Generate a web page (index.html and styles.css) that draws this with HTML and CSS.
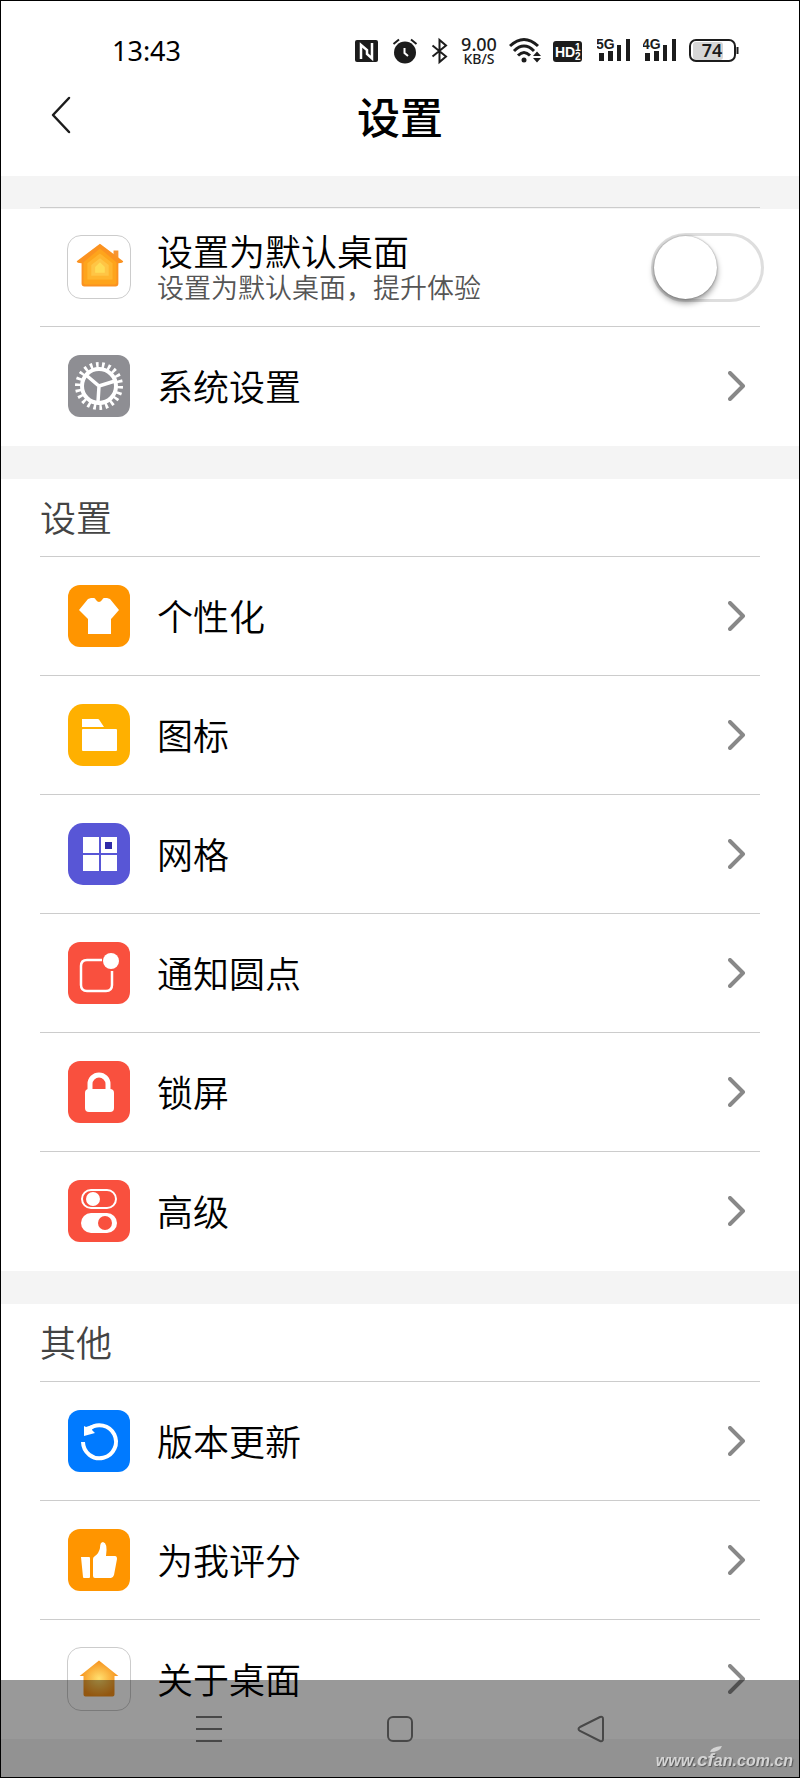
FILE: index.html
```html
<!DOCTYPE html>
<html lang="zh-CN">
<head>
    <meta charset="UTF-8">
    <meta name="viewport" content="width=device-width, initial-scale=1">
    <title>设置</title>
    <link rel="stylesheet" href="styles.css">
</head>
<body>
    <div class="screen">
        <!-- Status bar -->
        <div class="status-bar">
            <span class="time">13:43</span>
            <div class="status-icons">
                <svg width="24" height="28" viewBox="0 0 24 28">
                    <rect x="0" y="3" width="23" height="22" rx="2" fill="#1c1c1c"/>
                    <path d="M6 22V8L12 13v4l5 4.500V6" fill="none" stroke="#fff" stroke-width="2.500"/>
                </svg>
                <svg width="28" height="28" viewBox="0 0 28 28">
                    <circle cx="14" cy="15.500" r="11" fill="#1c1c1c"/>
                    <path d="M2.500 7L8 2.500M25.500 7L20 2.500" stroke="#1c1c1c" stroke-width="2"/>
                    <path d="M13.500 11v5l3.500 3" fill="none" stroke="#fff" stroke-width="2"/>
                </svg>
                <svg width="18" height="28" viewBox="0 0 18 28">
                    <path d="M1.500 8.500L15 19.500L8.500 25V3L15 8.500L1.500 19.500" fill="none" stroke="#1c1c1c" stroke-width="2"/>
                </svg>
                <div class="net-speed">
                    <span class="speed-value">9.00</span>
                    <span class="speed-unit">KB/S</span>
                </div>
                <svg width="32" height="28" viewBox="0 0 32 28">
                    <g fill="none" stroke="#1c1c1c" stroke-width="3">
                        <path d="M1 9Q15 -4 29 9"/>
                        <path d="M5 14Q15 4 25 14"/>
                        <path d="M9 18.500Q15 12.500 21 18.500"/>
                    </g>
                    <circle cx="15" cy="23" r="2.500" fill="#1c1c1c"/>
                    <path d="M28 14.500l4 4.500h-8zM28 25.500l4-4.500h-8z" fill="#1c1c1c"/>
                </svg>
                <svg width="32" height="28" viewBox="0 0 32 28">
                    <rect x="0" y="4" width="29" height="21" rx="3" fill="#1c1c1c"/>
                    <text x="2" y="20" class="hd-text">HD</text>
                    <text x="22" y="14" class="hd-num">1</text>
                    <text x="22" y="23" class="hd-num">2</text>
                </svg>
                <svg width="34" height="28" viewBox="0 0 34 28">
                    <path d="M2 16h5v8H2zM11 14h5v10h-5zM20 8h4v16h-4zM29 2h4v22h-4z" fill="#1c1c1c"/>
                    <text x="-1" y="12" class="net-text">5G</text>
                </svg>
                <svg width="34" height="28" viewBox="0 0 34 28">
                    <path d="M2 16h5v8H2zM11 14h5v10h-5zM20 8h4v16h-4zM29 2h4v22h-4z" fill="#1c1c1c"/>
                    <text x="-1" y="12" class="net-text">4G</text>
                </svg>
                <svg width="50" height="28" viewBox="0 0 50 28">
                    <rect x="4" y="5" width="30" height="18" rx="3" fill="#d6d6d6"/>
                    <rect x="1" y="3" width="45" height="21" rx="6" fill="none" stroke="#1c1c1c" stroke-width="2"/>
                    <path d="M48.500 10v7" stroke="#1c1c1c" stroke-width="2"/>
                    <text x="23" y="20" class="battery-text">74</text>
                </svg>
            </div>
        </div>

        <header class="title-bar">
            <button class="back-button" aria-label="返回">
                <svg width="22" height="38" viewBox="0 0 22 38">
                    <path d="M19 2L3 19L19 36" fill="none" stroke="#1c1c1c" stroke-width="2.500" stroke-linecap="round" stroke-linejoin="round"/>
                </svg>
            </button>
            <h1>设置</h1>
        </header>

        <main>
            <div class="divider"></div>

            <ul class="list list-first">
                <li class="row">
                    <svg class="icon icon-outline" viewBox="0 0 64 64">
                        <path d="M47 22V15h5v11z" fill="#f79432"/>
                        <path d="M33 8L57 26Q57 28 52 28V49Q52 52 49 52H17Q14 52 14 49V28Q9 28 9 26Z" fill="#fb9220"/>
                        <path d="M33 13L50 27V48Q50 50 48 50H18Q16 50 16 48V27Z" fill="#fea41c"/>
                        <path d="M33 18L46 28V45H20V28Z" fill="#ffb52e"/>
                        <path d="M33 23L42 30V41H24V30Z" fill="#ffc545"/>
                        <path d="M33 27L38 32V38H28V32Z" fill="#ffdb55"/>
                    </svg>
                    <label class="label" for="default-home">
                        设置为默认桌面
                        <small>设置为默认桌面，提升体验</small>
                    </label>
                    <input type="checkbox" class="switch" id="default-home">
                </li>
                <li>
                    <a class="row" href="#">
                        <svg class="icon gray" viewBox="0 0 62 62">
                            <g fill="none" stroke="#fff">
                                <circle cx="31" cy="31" r="21" stroke-width="6" pathLength="132" stroke-dasharray="2.600 3.400"/>
                                <circle cx="31" cy="31" r="17" stroke-width="4"/>
                                <path d="M18 20L31 31L47 26M31 31L30 47" stroke-width="3.500"/>
                            </g>
                        </svg>
                        <span class="label">系统设置</span>
                        <svg class="arrow" viewBox="0 0 18 30"><path d="M2 2L15 15L2 28"/></svg>
                    </a>
                </li>
            </ul>

            <div class="divider"></div>

            <h2>设置</h2>
            <ul class="list">
                <li>
                    <a class="row" href="#">
                        <svg class="icon orange" viewBox="0 0 62 62">
                            <path d="M23 13h3q1 0 2 2 3 4 6 0 1-2 2-2h3l3 1 9 11-7 8-1 1v15H20V34l-1-1-8-8 9-11z" fill="#fff"/>
                        </svg>
                        <span class="label">个性化</span>
                        <svg class="arrow" viewBox="0 0 18 30"><path d="M2 2L15 15L2 28"/></svg>
                    </a>
                </li>
                <li>
                    <a class="row" href="#">
                        <svg class="icon yellow icon-round" viewBox="0 0 62 62">
                            <path d="M14 15h16q1 0 2 2l4 6H14zM15 25h33q1 0 1 1v20q0 1-1 1H15q-1 0-1-1V26q0-1 1-1z" fill="#fff"/>
                        </svg>
                        <span class="label">图标</span>
                        <svg class="arrow" viewBox="0 0 18 30"><path d="M2 2L15 15L2 28"/></svg>
                    </a>
                </li>
                <li>
                    <a class="row" href="#">
                        <svg class="icon purple icon-round" viewBox="0 0 62 62">
                            <path d="M15 14h16v16H15zM33 14h16v16H33zM15 32h16v16H15zM33 32h16v16H33z" fill="#fff"/>
                            <rect x="37" y="19" width="7" height="7" fill="#2f2ba8"/>
                        </svg>
                        <span class="label">网格</span>
                        <svg class="arrow" viewBox="0 0 18 30"><path d="M2 2L15 15L2 28"/></svg>
                    </a>
                </li>
                <li>
                    <a class="row" href="#">
                        <svg class="icon red" viewBox="0 0 62 62">
                            <path d="M34 18H19q-6 0-6 6v19q0 6 6 6h19q6 0 6-6V29" fill="none" stroke="#fff" stroke-width="2.500"/>
                            <circle cx="43" cy="19" r="8" fill="#fff"/>
                        </svg>
                        <span class="label">通知圆点</span>
                        <svg class="arrow" viewBox="0 0 18 30"><path d="M2 2L15 15L2 28"/></svg>
                    </a>
                </li>
                <li>
                    <a class="row" href="#">
                        <svg class="icon red" viewBox="0 0 62 62">
                            <path d="M22 29V23a9 9 0 0 1 18 0v6" fill="none" stroke="#fff" stroke-width="5"/>
                            <rect x="17" y="28" width="29" height="23" rx="4" fill="#fff"/>
                        </svg>
                        <span class="label">锁屏</span>
                        <svg class="arrow" viewBox="0 0 18 30"><path d="M2 2L15 15L2 28"/></svg>
                    </a>
                </li>
                <li>
                    <a class="row" href="#">
                        <svg class="icon red" viewBox="0 0 62 62">
                            <rect x="14" y="10" width="34" height="18" rx="9" fill="none" stroke="#fff" stroke-width="2"/>
                            <circle cx="25" cy="19" r="7" fill="#fff"/>
                            <rect x="13" y="33" width="36" height="20" rx="10" fill="#fff"/>
                            <circle cx="37" cy="43" r="7" fill="#f9503e"/>
                        </svg>
                        <span class="label">高级</span>
                        <svg class="arrow" viewBox="0 0 18 30"><path d="M2 2L15 15L2 28"/></svg>
                    </a>
                </li>
            </ul>

            <div class="divider"></div>

            <h2>其他</h2>
            <ul class="list">
                <li>
                    <a class="row" href="#">
                        <svg class="icon blue" viewBox="0 0 62 62">
                            <path d="M15 32A16.500 16.500 0 1 0 21 19" fill="none" stroke="#fff" stroke-width="4"/>
                            <path d="M16 16l2 1 6-2v5l3 3-11 3z" fill="#fff"/>
                        </svg>
                        <span class="label">版本更新</span>
                        <svg class="arrow" viewBox="0 0 18 30"><path d="M2 2L15 15L2 28"/></svg>
                    </a>
                </li>
                <li>
                    <a class="row" href="#">
                        <svg class="icon orange" viewBox="0 0 62 62">
                            <path d="M13 28h8q1 0 1 1v19q0 1-1 1h-5q-1 0-1-1z" fill="#fff"/>
                            <path d="M25 30q0-2 2-3 4-3 5-8 0-6 3-6 5 1 3 14h9q2 0 2 3l-3 16q-1 3-3 3H27q-2 0-2-2z" fill="#fff"/>
                        </svg>
                        <span class="label">为我评分</span>
                        <svg class="arrow" viewBox="0 0 18 30"><path d="M2 2L15 15L2 28"/></svg>
                    </a>
                </li>
                <li>
                    <a class="row" href="#">
                        <svg class="icon icon-outline" viewBox="0 0 64 64">
                            <defs>
                                <radialGradient id="house-glow">
                                    <stop offset="0" stop-color="#ffe070"/>
                                    <stop offset="1" stop-color="#f6921c"/>
                                </radialGradient>
                            </defs>
                            <path d="M32 13L52 29H48V48Q48 50 46 50H18Q16 50 16 48V29H12Z" fill="url(#house-glow)"/>
                        </svg>
                        <span class="label">关于桌面</span>
                        <svg class="arrow" viewBox="0 0 18 30"><path d="M2 2L15 15L2 28"/></svg>
                    </a>
                </li>
            </ul>
        </main>

        <!-- System navigation, drawn over the list -->
        <nav class="nav-bar">
            <button aria-label="最近任务">
                <svg width="28" height="28" viewBox="0 0 28 28"><path d="M1 2h26M1 14h26M1 26h26"/></svg>
            </button>
            <button aria-label="主屏幕">
                <svg width="28" height="28" viewBox="0 0 28 28"><rect x="2" y="2" width="24" height="24" rx="5"/></svg>
            </button>
            <button aria-label="返回上一页">
                <svg width="28" height="28" viewBox="0 0 28 28"><path d="M3 12L23 2q3-1 3 2v20q0 3-3 2L3 16q-3-2 0-4z"/></svg>
            </button>
            <span class="watermark">www.<b>cf</b>an.com.cn<svg class="leaf" viewBox="0 0 12 6"><path d="M0 6Q1 1 12 0Q10 6 0 6z"/></svg></span>
        </nav>
    </div>
</body>
</html>
```

FILE: styles.css
```css
* {
    box-sizing: border-box;
    margin: 0;
    padding: 0;
}

body {
    font-family: "Noto Sans CJK SC", sans-serif;
    background-color: #f4f4f4;
    color: #000;
}

button {
    background: none;
    border: none;
    cursor: pointer;
}

a {
    color: inherit;
    text-decoration: none;
}

ul {
    list-style: none;
}

svg {
    display: block;
    flex-shrink: 0;
}

.screen {
    min-height: 100vh;
    border: 1px solid #000;
}

/* Status bar */
.status-bar {
    display: flex;
    justify-content: space-between;
    align-items: center;
    padding: 35px 60px 0 111px;
    height: 65px;
    background-color: #fff;
    font-family: "Noto Sans", sans-serif;
}

.time {
    font-size: 27px;
    line-height: 30px;
}

.status-icons {
    display: flex;
    align-items: center;
    gap: 12px;
}

.net-speed {
    display: flex;
    flex-direction: column;
    align-items: center;
    width: 36px;
    color: #1c1c1c;
}

.speed-value {
    font-size: 18px;
    font-weight: 500;
    line-height: 16px;
}

.speed-unit {
    font-size: 14px;
    font-weight: 500;
    line-height: 14px;
}

.hd-text {
    fill: #fff;
    font: bold 14px "Liberation Sans", sans-serif;
}

.hd-num {
    fill: #fff;
    font: bold 10px "Liberation Sans", sans-serif;
}

.net-text {
    fill: #1c1c1c;
    font: bold 14px "Liberation Sans", sans-serif;
    stroke: #fff;
    stroke-width: 2px;
    paint-order: stroke;
}

.battery-text {
    fill: #1c1c1c;
    font: 600 18px "Noto Sans", sans-serif;
    text-anchor: middle;
}

/* Title bar */
.title-bar {
    display: grid;
    grid-template-columns: 100px 1fr 100px;
    align-items: center;
    height: 110px;
    padding-bottom: 12px;
    background-color: #fff;
}

.back-button {
    justify-self: start;
    padding: 10px 20px 10px 49px;
}

h1 {
    font-size: 43px;
    font-weight: 500;
    line-height: 60px;
    text-align: center;
}

/* Settings list */
main {
    background-color: #fff;
}

.divider {
    height: 33px;
    background-color: #f4f4f4;
}

h2 {
    padding: 0 39px 2px;
    font-size: 36px;
    font-weight: 350;
    line-height: 75px;
    color: #444;
}

.list {
    padding: 0 39px 1px;
}

.list-first {
    margin-top: -2px;
}

.row {
    display: flex;
    align-items: center;
    gap: 27px;
    height: 119px;
    padding: 0 14px 0 28px;
    border-top: 1px solid #ccc;
}

.icon {
    width: 62px;
    height: 62px;
    border-radius: 12px;
}

.icon-round {
    border-radius: 15px;
}

.icon-outline {
    width: 64px;
    height: 64px;
    margin: 0 -1px;
    border: 1px solid #ccc;
    border-radius: 14px;
}

.gray {
    background-color: #8e8e93;
}

.orange {
    background-color: #ff9500;
}

.yellow {
    background-color: #ffb000;
}

.purple {
    background-color: #5856d6;
}

.red {
    background-color: #f9503e;
}

.blue {
    background-color: #007aff;
}

.label {
    flex: 1;
    padding-bottom: 2px;
    font-size: 36px;
    font-weight: 350;
    line-height: 42px;
}

.label small {
    display: block;
    font-size: 27px;
    line-height: 32px;
    color: #555;
}

.arrow {
    width: 18px;
    height: 30px;
    fill: none;
    stroke: #888;
    stroke-width: 4px;
    stroke-linecap: round;
    stroke-linejoin: round;
}

/* Switch */
.switch {
    appearance: none;
    flex-shrink: 0;
    width: 113px;
    height: 69px;
    margin-right: -18px;
    border: 3px solid #dedede;
    border-radius: 35px;
    cursor: pointer;
}

.switch::before {
    content: "";
    display: block;
    width: 63px;
    height: 63px;
    border-radius: 50%;
    background-color: #fff;
    box-shadow: 0 4px 6px rgba(0, 0, 0, 0.4), 0 0 2px rgba(0, 0, 0, 0.4);
}

.switch:checked {
    background-color: #4cd964;
}

.switch:checked::before {
    margin-left: 44px;
}

/* Bottom navigation */
.nav-bar {
    position: fixed;
    left: 1px;
    right: 1px;
    bottom: 1px;
    display: flex;
    height: 97px;
    padding: 0 14%;
    background-color: rgba(0, 0, 0, 0.4);
}

.nav-bar button {
    flex: 1;
    display: flex;
    justify-content: center;
    align-items: center;
}

.nav-bar button svg {
    fill: none;
    stroke: #484848;
    stroke-width: 2px;
}

.watermark {
    position: absolute;
    right: 6px;
    bottom: 6px;
    font: italic bold 16px/20px "Liberation Sans", sans-serif;
    color: #d4d4d4;
    text-shadow: 1px 1px 1px #555;
}

.watermark b {
    font-size: 19px;
}

.leaf {
    position: absolute;
    left: 54px;
    top: -4px;
    width: 12px;
    height: 6px;
    fill: #d4d4d4;
}
```
